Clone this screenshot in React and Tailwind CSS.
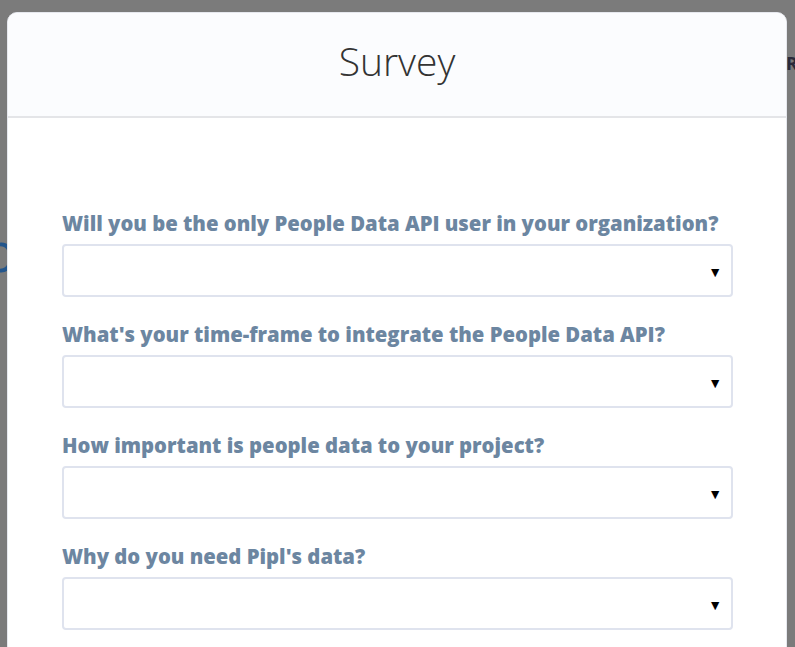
import React from "react";

const questions = [
  "Will you be the only People Data API user in your organization?",
  "What's your time-frame to integrate the People Data API?",
  "How important is people data to your project?",
  "Why do you need Pipl's data?",
];

function Field({ label }) {
  return (
    <div className="flex flex-col gap-[8px]">
      <label className="block text-[20.3px] leading-[26px] font-extrabold text-[#6c86a1] whitespace-nowrap">
        {label}
      </label>
      <div className="h-[53px] rounded-[4px] border-2 border-[#dfe3ee] bg-white flex items-center justify-end pr-[9px]">
        <span className="text-[14px] leading-[14px] text-black mt-[2px]">▼</span>
      </div>
    </div>
  );
}

export default function App() {
  return (
    <div
      className="relative w-[795px] h-[647px] overflow-hidden bg-[#7b7b7b]"
      style={{ fontFamily: '"Open Sans", "Liberation Sans", sans-serif' }}
    >
      {/* faded page behind overlay */}
      <div className="absolute left-[-17px] top-[224px] text-[54px] leading-[54px] text-[#23558c]">p</div>
      <div className="absolute left-[786px] top-[50px] text-[18px] font-bold text-[#2a2a3a]">RI</div>

      {/* modal */}
      <div className="absolute left-[7px] top-[12px] w-[780px] h-[660px] rounded-t-[10px] bg-white border border-[#e6e8ee] overflow-hidden flex flex-col">
        <div className="h-[105px] shrink-0 bg-[#fbfcfe] border-b-2 border-[#e4e5e8] flex items-center justify-center">
          <h1 className="text-[39px] font-light text-[#333] leading-none mt-[-8px]">Survey</h1>
        </div>
        <div className="pt-[92px] pl-[54px] pr-[53px] flex flex-col gap-[24px]">
          {questions.map((q) => (
            <Field key={q} label={q} />
          ))}
        </div>
      </div>
    </div>
  );
}
